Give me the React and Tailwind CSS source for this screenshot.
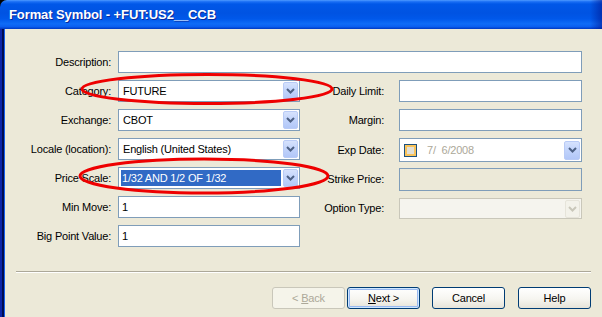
import React from 'react';

function Chevron({ color = '#4d6185' }) {
  return (
    <svg width="9" height="6" viewBox="0 0 9 6">
      <path d="M1 1 L4.5 4.5 L8 1" fill="none" stroke={color} strokeWidth="2" />
    </svg>
  );
}

function DropButton({ disabled }) {
  if (disabled) {
    return (
      <div className="mr-px flex h-[18px] w-[15px] items-center justify-center rounded-[2px] border border-[#e6e4da] bg-[#f3f2ea]">
        <Chevron color="#c9c7ba" />
      </div>
    );
  }
  return (
    <div className="mr-px flex h-[18px] w-[15px] items-center justify-center rounded-[2px] border border-[#b9cbf6] bg-[linear-gradient(180deg,#d6e2fd_0%,#c1d3fb_50%,#b2c7f8_100%)]">
      <Chevron />
    </div>
  );
}

function Label({ children, className = '' }) {
  return <div className={`flex items-center justify-end whitespace-nowrap ${className}`}>{children}</div>;
}

function TextBox({ value, className = '' }) {
  return (
    <div className={`flex h-[22px] items-center border border-[#7f9db9] bg-white pl-[3px] ${className}`}>
      {value}
    </div>
  );
}

function Combo({ value, selected, className = '' }) {
  return (
    <div className={`flex h-[22px] items-center border border-[#7f9db9] bg-white ${className}`}>
      <div className="flex-1 pl-[2px] pr-[2px]">
        {selected ? (
          <div className="flex h-[16px] items-center bg-[#316ac5] pl-[1px] text-white">{value}</div>
        ) : (
          <div className="pl-[2px]">{value}</div>
        )}
      </div>
      <DropButton />
    </div>
  );
}

function Button({ children, disabled, primary }) {
  let cls =
    'flex h-[22px] w-[73px] items-center justify-center rounded-[3px] border border-[#003c74] bg-[linear-gradient(180deg,#ffffff_0%,#f6f5f0_55%,#e6e3d8_100%)] text-black';
  if (disabled) {
    cls =
      'flex h-[22px] w-[73px] items-center justify-center rounded-[3px] border border-[#c9c7ba] bg-[#f5f4ea] text-[#aca899]';
  }
  if (primary) {
    cls += ' shadow-[inset_0_0_0_1px_#cee7ff,inset_0_0_0_2px_#98b8f0]';
  }
  return <div className={cls}>{children}</div>;
}

export default function App() {
  return (
    <div className="relative flex h-[317px] w-[602px] flex-col overflow-hidden bg-black font-['Liberation_Sans',Arial,sans-serif] text-[11px] text-black">
      {/* title bar */}
      <div className="flex h-[29px] shrink-0 items-center rounded-tl-[7px] bg-[linear-gradient(90deg,transparent_98%,rgba(0,20,140,0.55)_100%),linear-gradient(180deg,#4e9bff_0%,#1a6ff5_6%,#0058e8_14%,#0053e2_45%,#0058ea_65%,#0f6cf7_82%,#0a5ff0_92%,#0038c0_100%)] pl-[9px]">
        <span className="text-[13px] font-bold tracking-[-0.1px] text-white [text-shadow:1px_1px_0_#0c2a9c]">
          Format Symbol - +FUT:US2__CCB
        </span>
      </div>

      <div className="flex flex-1">
        {/* left frame */}
        <div className="w-[2px] bg-[#0a24a8]" />
        <div className="w-[2px] bg-[#000c50]" />
        <div className="w-px bg-[#1660f0]" />

        <div className="flex flex-1 flex-col bg-[#ece9d8] pt-[22px] tracking-[-0.2px]">
          {/* Description */}
          <div className="flex h-[22px]">
            <Label className="w-[106px]">Description:</Label>
            <TextBox value="" className="ml-[7px] w-[464px]" />
          </div>

          <div className="mt-[7px] flex">
            {/* left column */}
            <div className="flex flex-col gap-[7px]">
              <div className="flex h-[22px]">
                <Label className="w-[106px]">Category:</Label>
                <Combo value="FUTURE" className="ml-[7px] w-[182px]" />
              </div>
              <div className="flex h-[22px]">
                <Label className="w-[106px]">Exchange:</Label>
                <Combo value="CBOT" className="ml-[7px] w-[182px]" />
              </div>
              <div className="flex h-[22px]">
                <Label className="w-[106px]">Locale (location):</Label>
                <Combo value="English (United States)" className="ml-[7px] w-[182px]" />
              </div>
              <div className="flex h-[22px]">
                <Label className="w-[106px]">Price Scale:</Label>
                <Combo value="1/32 AND 1/2 OF 1/32" selected className="ml-[7px] w-[182px]" />
              </div>
              <div className="flex h-[22px]">
                <Label className="w-[106px]">Min Move:</Label>
                <TextBox value="1" className="ml-[7px] w-[182px]" />
              </div>
              <div className="flex h-[22px]">
                <Label className="w-[106px]">Big Point Value:</Label>
                <TextBox value="1" className="ml-[7px] w-[182px]" />
              </div>
            </div>

            {/* right column */}
            <div className="flex flex-col">
              <div className="flex h-[22px]">
                <Label className="w-[84px]">Daily Limit:</Label>
                <TextBox value="" className="ml-[15px] w-[183px]" />
              </div>
              <div className="mt-[7px] flex h-[22px]">
                <Label className="w-[84px]">Margin:</Label>
                <TextBox value="" className="ml-[15px] w-[183px]" />
              </div>
              <div className="mt-[7px] flex h-[24px]">
                <Label className="w-[84px]">Exp Date:</Label>
                <div className="ml-[15px] flex w-[183px] items-center border border-[#7f9db9] bg-white">
                  <div className="ml-[4px] flex h-[13px] w-[13px] items-center justify-center border border-[#1c5180] bg-[#dcdad0]">
                    <div className="h-[11px] w-[11px] border-2 border-[#f9c35a] bg-[#e2e0d6]" />
                  </div>
                  <div className="ml-[10px] flex-1 whitespace-pre text-[#aca899]">7/  6/2008</div>
                  <div className="mr-px h-[19px]">
                    <div className="flex h-[19px] w-[16px] items-center justify-center rounded-[2px] border border-[#b9cbf6] bg-[linear-gradient(180deg,#d6e2fd_0%,#c1d3fb_50%,#b2c7f8_100%)]">
                      <Chevron />
                    </div>
                  </div>
                </div>
              </div>
              <div className="mt-[6px] flex h-[23px]">
                <Label className="w-[84px]">Strike Price:</Label>
                <div className="ml-[15px] w-[183px] border border-[#7f9db9] bg-[#ece9d8]" />
              </div>
              <div className="mt-[7px] flex h-[21px]">
                <Label className="w-[84px]">Option Type:</Label>
                <div className="ml-[15px] flex w-[183px] items-center justify-end border border-[#c9c7ba] bg-[#f5f4ee]">
                  <DropButton disabled />
                </div>
              </div>
            </div>
          </div>

          {/* separator */}
          <div className="mt-[24px] ml-[11px] w-[575px]">
            <div className="h-px bg-[#aca899]" />
            <div className="h-px bg-white" />
          </div>

          {/* buttons */}
          <div className="mt-[14px] flex w-[586px] justify-end">
            <div className="flex">
              <Button disabled>
                <span>
                  &lt; <span className="underline">B</span>ack
                </span>
              </Button>
              <div className="ml-[2px]">
                <Button primary>
                  <span>
                    <span className="underline">N</span>ext &gt;
                  </span>
                </Button>
              </div>
              <div className="ml-[12px]">
                <Button>Cancel</Button>
              </div>
              <div className="ml-[13px]">
                <Button>Help</Button>
              </div>
            </div>
          </div>
        </div>
      </div>

      {/* red annotation ellipses drawn over the dialog */}
      <svg className="pointer-events-none absolute left-0 top-0" width="602" height="317">
        <ellipse cx="207" cy="89" rx="125" ry="14.5" fill="none" stroke="#ee0000" strokeWidth="3" />
        <ellipse cx="204" cy="176" rx="124" ry="17" fill="none" stroke="#ee0000" strokeWidth="3" />
      </svg>
    </div>
  );
}
